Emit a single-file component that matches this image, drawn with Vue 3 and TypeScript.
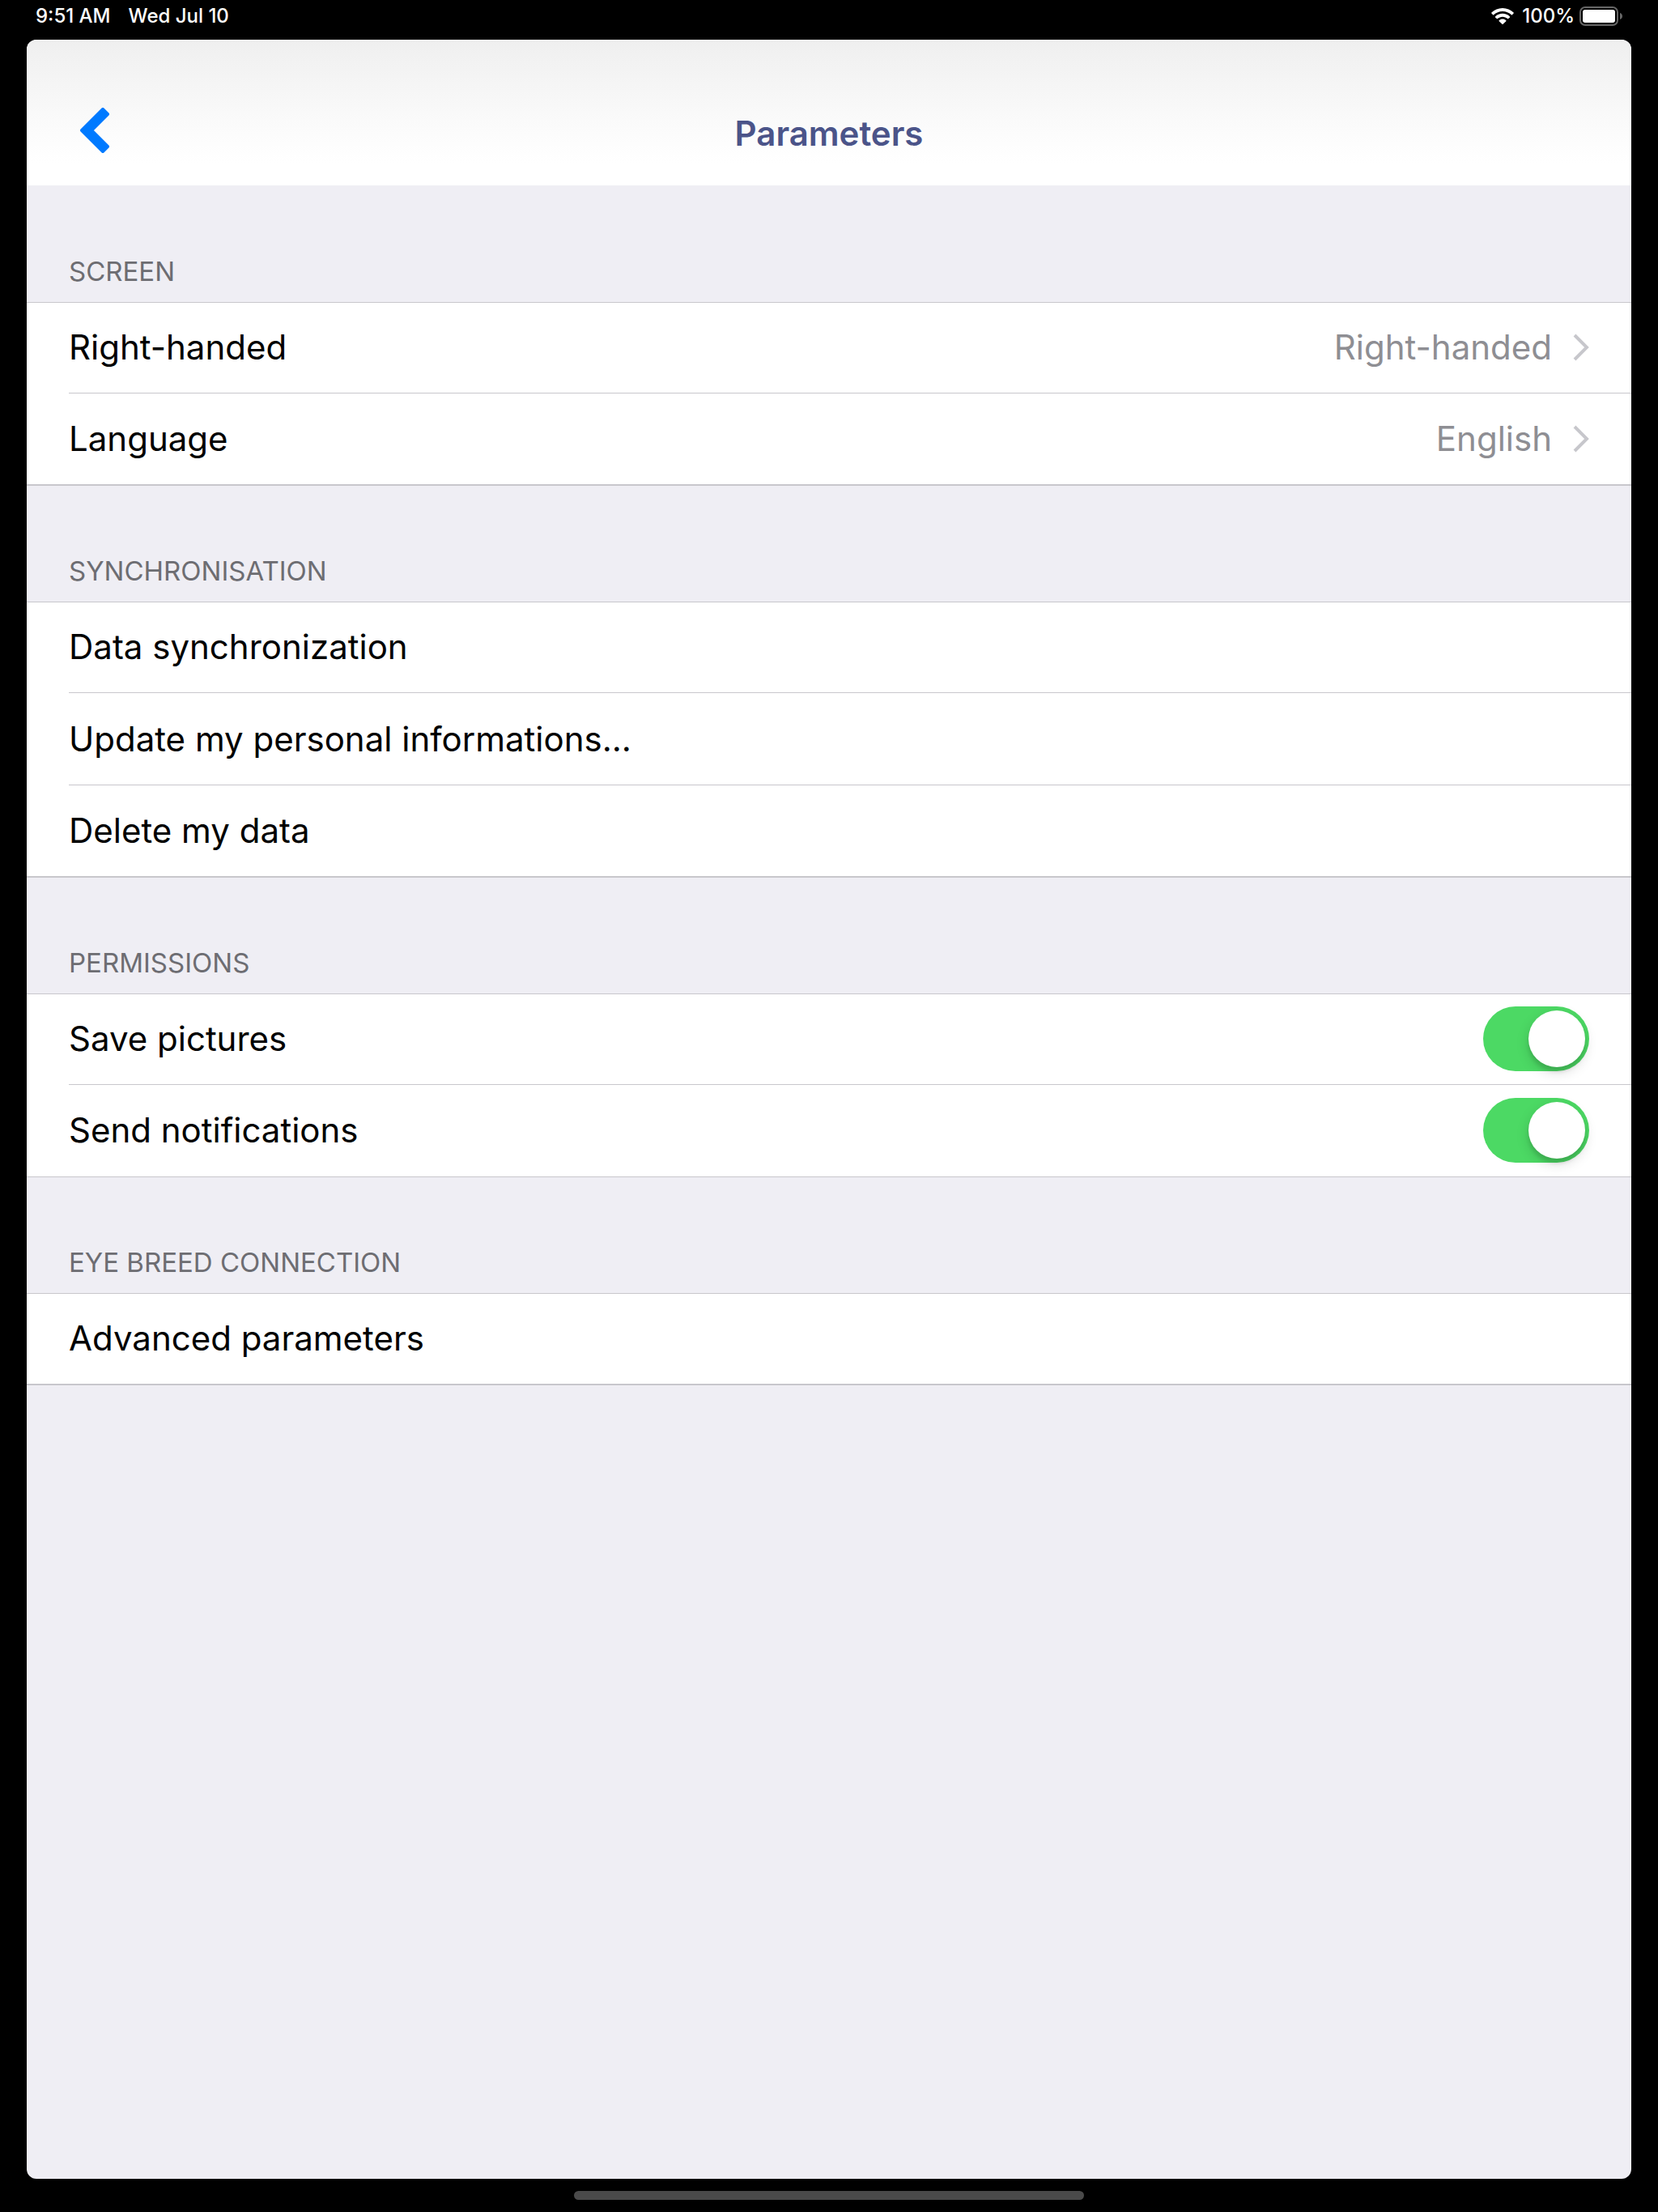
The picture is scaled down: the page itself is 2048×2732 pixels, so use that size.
<script setup lang="ts">
import { reactive } from 'vue'

interface Row {
  id: string
  label: string
  kind: 'link' | 'action' | 'switch'
  value?: string
}

interface Section {
  title: string
  rows: Row[]
}

const sections: Section[] = [
  {
    title: 'SCREEN',
    rows: [
      { id: 'hand', label: 'Right-handed', kind: 'link', value: 'Right-handed' },
      { id: 'language', label: 'Language', kind: 'link', value: 'English' },
    ],
  },
  {
    title: 'SYNCHRONISATION',
    rows: [
      { id: 'sync', label: 'Data synchronization', kind: 'action' },
      { id: 'update', label: 'Update my personal informations...', kind: 'action' },
      { id: 'delete', label: 'Delete my data', kind: 'action' },
    ],
  },
  {
    title: 'PERMISSIONS',
    rows: [
      { id: 'pictures', label: 'Save pictures', kind: 'switch' },
      { id: 'notifications', label: 'Send notifications', kind: 'switch' },
    ],
  },
  {
    title: 'EYE BREED CONNECTION',
    rows: [{ id: 'advanced', label: 'Advanced parameters', kind: 'action' }],
  },
]

const permissions = reactive<Record<string, boolean>>({
  pictures: true,
  notifications: true,
})
</script>

<template>
  <div class="device">
    <div class="status">
      <div class="status-left">
        <span>9:51 AM</span>
        <span>Wed Jul 10</span>
      </div>
      <div class="status-right">
        <svg class="wifi" viewBox="0 0 28 20" aria-hidden="true">
          <path d="M14 0C8.700 0 3.900 2.100.4 5.500a.7.7 0 0 0 0 1l1.700 1.700c.3.300.7.300 1 0C5.900 5.500 9.800 3.900 14 3.900s8.100 1.600 10.900 4.300c.3.300.7.300 1 0l1.700-1.700a.7.7 0 0 0 0-1C24.100 2.100 19.300 0 14 0z" />
          <path d="M14 6.800c-3.500 0-6.700 1.400-9 3.600a.7.700 0 0 0 0 1l1.800 1.700c.3.300.7.300 1 0 1.600-1.500 3.800-2.400 6.200-2.400s4.600.9 6.200 2.400c.3.300.7.300 1 0l1.800-1.700a.7.700 0 0 0 0-1c-2.300-2.200-5.500-3.600-9-3.600z" />
          <path d="M14 13.600c-1.700 0-3.200.7-4.300 1.700a.7.700 0 0 0 0 1l3.800 3.500c.3.300.7.300 1 0l3.800-3.500a.7.700 0 0 0 0-1c-1.100-1-2.600-1.700-4.300-1.700z" />
        </svg>
        <span class="percent">100%</span>
        <svg class="battery" viewBox="0 0 53 24" aria-hidden="true">
          <rect x="1" y="1" width="46" height="22" rx="6" fill="none" stroke="#666" stroke-width="2" />
          <rect x="4" y="4" width="40" height="16" rx="3" fill="#fff" />
          <path d="M50 8c2 .6 3 2.200 3 4s-1 3.400-3 4z" fill="#666" />
        </svg>
      </div>
    </div>

    <div class="window">
      <header class="bar">
        <button class="back" type="button" aria-label="Back">
          <svg viewBox="0 0 36 56" aria-hidden="true">
            <path d="M28 2 2 28l26 26 6-6-20-20 20-20z" fill="#007aff" stroke="#007aff" stroke-width="4" stroke-linejoin="round" />
          </svg>
        </button>
        <h1>Parameters</h1>
      </header>

      <main>
        <section v-for="section in sections" :key="section.title">
          <h2>{{ section.title }}</h2>
          <ul :class="{ thin: section.rows[0].kind === 'switch' }">
            <li v-for="row in section.rows" :key="row.id">
              <label v-if="row.kind === 'switch'" class="row">
                <span>{{ row.label }}</span>
                <input v-model="permissions[row.id]" class="switch" type="checkbox" role="switch" />
              </label>
              <button v-else class="row" type="button">
                <span>{{ row.label }}</span>
                <span v-if="row.kind === 'link'" class="detail">
                  <span>{{ row.value }}</span>
                  <svg class="chevron" viewBox="0 0 20 34" aria-hidden="true">
                    <path d="M2 2l15 15L2 32" fill="none" stroke="#c7c7cc" stroke-width="4" />
                  </svg>
                </span>
              </button>
            </li>
          </ul>
        </section>
      </main>
    </div>

    <div class="home"></div>
  </div>
</template>

<style>
body {
  margin: 0;
  background: #000;
}
</style>

<style scoped>
.device {
  box-sizing: border-box;
  min-height: 100vh;
  padding: 0 33px 15px;
  display: flex;
  flex-direction: column;
  background: #000;
  font-family: Inter, "Liberation Sans", sans-serif;
}

.status {
  height: 49px;
  padding: 0 11px;
  box-sizing: border-box;
  display: flex;
  justify-content: space-between;
  color: #fff;
  font-size: 24px;
  line-height: 40px;
  font-weight: 500;
}

.status-left {
  display: flex;
  gap: 22px;
}

.status-right {
  display: flex;
  align-items: center;
  height: 40px;
}

.wifi {
  width: 28px;
  height: 20px;
  fill: #fff;
}

.percent {
  margin: 0 6px 0 10px;
}

.battery {
  width: 53px;
  height: 24px;
}

.window {
  flex: 1;
  border-radius: 12px;
  overflow: hidden;
  background: #efeef4;
}

.bar {
  display: grid;
  grid-template-columns: 1fr auto 1fr;
  align-items: center;
  height: 180px;
  box-sizing: border-box;
  padding: 52px 66px 0;
  background: linear-gradient(#efefef, #f6f6f6 35%, #fcfcfc 65%, #fff 85%);
}

.back {
  justify-self: start;
  padding: 0;
  border: 0;
  background: none;
  line-height: 0;
}

.back svg {
  width: 36px;
  height: 56px;
  margin-bottom: 8px;
}

h1 {
  margin: 0;
  grid-column: 2;
  color: #4b5489;
  font-size: 42px;
  line-height: 52px;
  font-weight: 600;
}

main {
  padding-top: 1px;
}

h2 {
  box-sizing: border-box;
  height: 143px;
  margin: 0;
  padding: 85px 52px 0;
  color: #6d6d72;
  font-size: 33px;
  line-height: 40px;
  font-weight: 400;
}

ul {
  margin: 0;
  padding: 0;
  list-style: none;
  background: #fff;
  border-top: 1px solid #c8c7cc;
  border-bottom: 2px solid #c8c7cc;
}

ul.thin {
  border-bottom-width: 1px;
}

li {
  padding-left: 52px;
}

.row {
  display: flex;
  align-items: center;
  justify-content: space-between;
  box-sizing: border-box;
  width: 100%;
  height: 112px;
  padding: 0 52px 0 0;
  border: 0;
  background: none;
  color: #000;
  font: inherit;
  font-size: 42px;
  line-height: 52px;
  text-align: left;
}

li:first-child .row {
  height: 111px;
}

li:first-child .row,
.thin .row {
  padding-bottom: 2px;
}

li:nth-child(2):not(:last-child) .row,
.thin li:last-child .row {
  height: 113px;
}

li + li .row {
  position: relative;
}

li + li .row::before {
  content: "";
  position: absolute;
  top: -1px;
  left: 0;
  right: 0;
  height: 1px;
  background: #c8c7cc;
}

li:not(:last-child) {
  padding-bottom: 1px;
}

.detail {
  display: flex;
  align-items: center;
  gap: 26px;
  color: #8e8e93;
}

.chevron {
  width: 20px;
  height: 34px;
}

.switch {
  appearance: none;
  display: flex;
  box-sizing: border-box;
  width: 131px;
  height: 80px;
  margin: 0;
  padding: 5px;
  border-radius: 40px;
  background: #e5e5ea;
}

.switch:checked {
  justify-content: flex-end;
  background: #4cd964;
}

.switch::before {
  content: "";
  width: 70px;
  height: 70px;
  border-radius: 50%;
  background: #fff;
  box-shadow: 0 6px 16px rgba(0, 0, 0, 0.15), 0 6px 4px rgba(0, 0, 0, 0.1);
}

.home {
  align-self: center;
  width: 32%;
  max-width: 630px;
  height: 11px;
  margin-top: 15px;
  border-radius: 6px;
  background: #4a4a4a;
}
</style>
